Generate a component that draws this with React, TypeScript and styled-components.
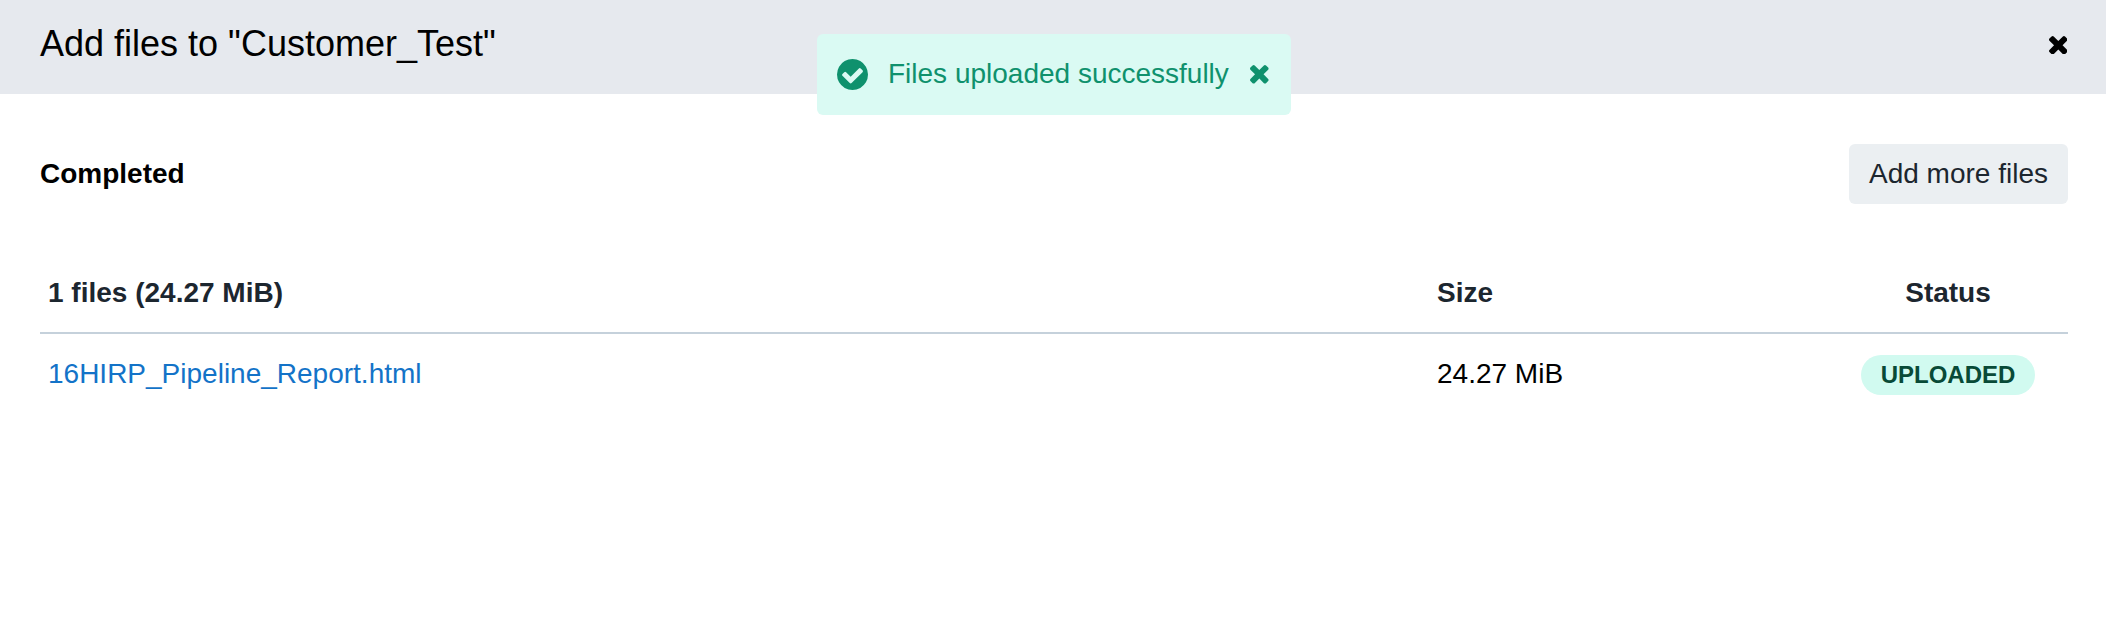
import React from "react";
import styled, { createGlobalStyle } from "styled-components";

const GlobalStyle = createGlobalStyle`
  * { box-sizing: border-box; }
  body { margin: 0; background: #fff; color: #000; font-family: "Liberation Sans", Arial, sans-serif; font-size: 28px; }
`;
const Page = styled.main`
  position: relative;
  width: 100%;
  height: 640px;
  overflow: hidden;
`;
const Header = styled.header`
  display: flex;
  justify-content: space-between;
  height: 94px;
  padding: 23px 38.7px 0 40px;
  background: #e6e9ee;
`;
const Title = styled.h1`
  margin: 0;
  font-size: 36px;
  font-weight: 400;
  line-height: 42px;
`;
const IconButton = styled.button`
  display: flex;
  align-items: center;
  height: 44px;
  padding: 0;
  border: 0;
  background: none;
  color: inherit;
`;
const Icon = styled.svg<{ $size: number }>`
  display: block;
  flex: none;
  width: ${(p) => p.$size}px;
  height: ${(p) => p.$size}px;
  fill: currentColor;
`;
const Toast = styled.div`
  position: absolute;
  top: 34px;
  left: 817px;
  display: flex;
  align-items: center;
  width: 474px;
  height: 81px;
  padding: 0 22px 0 20px;
  border-radius: 6px;
  background: #dafaf3;
  color: #0f916d;
`;
const ToastText = styled.span`
  flex: 1;
  margin-left: 20px;
  padding-bottom: 2px;
  white-space: nowrap;
`;
const Content = styled.section`
  padding: 50px 38px 0 40px;
`;
const Toolbar = styled.div`
  display: flex;
  align-items: center;
  justify-content: space-between;
  height: 60px;
`;
const Heading = styled.h2`
  margin: 0;
  font-size: 28px;
`;
const AddButton = styled.button`
  width: 219px;
  height: 60px;
  padding: 0;
  border: 0;
  border-radius: 6px;
  background: #ebeff2;
  color: #1c262f;
  font: inherit;
`;
const Table = styled.div`
  margin-top: 48px;
`;
const Row = styled.div<{ $head?: boolean }>`
  display: grid;
  grid-template-columns: 1389px 399px 240px;
  align-items: center;
  height: 82px;
  padding: ${(p) => (p.$head ? "2px 0 0 8px" : "0 0 0 8px")};
  border-bottom: ${(p) => (p.$head ? "2px solid #c5d1db" : "0")};
  color: ${(p) => (p.$head ? "#1c262f" : "#000")};
  font-weight: ${(p) => (p.$head ? 700 : 400)};
`;
const StatusCell = styled.div`
  display: flex;
  justify-content: center;
  width: 224px;
`;
const Value = styled.span`
  padding-bottom: 2px;
`;
const FileLink = styled.a`
  padding-bottom: 2px;
  color: #1373c8;
  text-decoration: none;
`;
const Badge = styled.span`
  display: flex;
  align-items: center;
  justify-content: center;
  width: 174px;
  height: 40px;
  border-radius: 20px;
  background: #d1faf0;
  color: #084a37;
  font-size: 24px;
  font-weight: 700;
`;

const CloseIcon = () => (
  <Icon $size={18.6} viewBox="302 366 1188 1188" aria-hidden="true">
    <path d="M1490 1322q0 40-28 68l-136 136q-28 28-68 28t-68-28l-294-294-294 294q-28 28-68 28t-68-28l-136-136q-28-28-28-68t28-68l294-294-294-294q-28-28-28-68t28-68l136-136q28-28 68-28t68 28l294 294 294-294q28-28 68-28t68 28l136 136q28 28 28 68t-28 68l-294 294 294 294q28 28 28 68z" />
  </Icon>
);

const CheckIcon = () => (
  <Icon $size={31} viewBox="128 128 1536 1536" aria-hidden="true">
    <path d="M1412 734q0-28-18-46l-91-90q-19-19-45-19t-45 19l-408 407-226-226q-19-19-45-19t-45 19l-91 90q-18 18-18 46 0 27 18 45l362 362q19 19 45 19 27 0 46-19l543-543q18-18 18-45zm252 162q0 209-103 385.5t-279.5 279.5-385.5 103-385.5-103-279.5-279.5-103-385.5 103-385.5 279.5-279.5 385.5-103 385.5 103 279.5 279.5 103 385.5z" />
  </Icon>
);

export default function App() {
  return (
    <Page>
      <GlobalStyle />
      <Header>
        <Title>Add files to "Customer_Test"</Title>
        <IconButton aria-label="Close"><CloseIcon /></IconButton>
      </Header>
      <Toast role="status">
        <CheckIcon />
        <ToastText>Files uploaded successfully</ToastText>
        <IconButton aria-label="Dismiss"><CloseIcon /></IconButton>
      </Toast>
      <Content>
        <Toolbar>
          <Heading>Completed</Heading>
          <AddButton>Add more files</AddButton>
        </Toolbar>
        <Table>
          <Row $head>
            <span>1 files (24.27 MiB)</span>
            <span>Size</span>
            <StatusCell>Status</StatusCell>
          </Row>
          <Row>
            <FileLink>16HIRP_Pipeline_Report.html</FileLink>
            <Value>24.27 MiB</Value>
            <StatusCell><Badge>UPLOADED</Badge></StatusCell>
          </Row>
        </Table>
      </Content>
    </Page>
  );
}
